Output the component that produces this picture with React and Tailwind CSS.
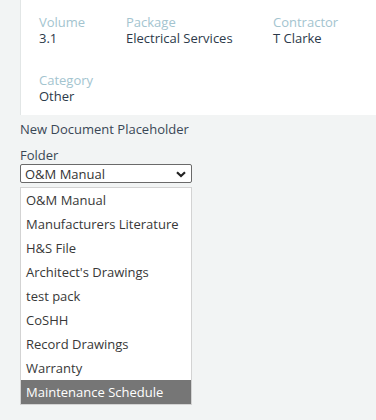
const details = [
  { label: "Volume", value: "3.1" },
  { label: "Package", value: "Electrical Services" },
  { label: "Contractor", value: "T Clarke" },
  { label: "Category", value: "Other" },
];

const folders = [
  "O&M Manual",
  "Manufacturers Literature",
  "H&S File",
  "Architect's Drawings",
  "test pack",
  "CoSHH",
  "Record Drawings",
  "Warranty",
  "Maintenance Schedule",
];

// pale blue label over a dark value
function Field({ label, value }) {
  return (
    <div className="leading-[16px]">
      <div className="text-[#a3c4cf]">{label}</div>
      <div className="text-[#2c3a4a]">{value}</div>
    </div>
  );
}

export default function App() {
  const selected = "Maintenance Schedule";

  return (
    <div
      className="min-h-[420px] w-full bg-[#f2f4f4] text-[13px]"
      style={{ fontFamily: '"Open Sans", sans-serif' }}
    >
      {/* details card */}
      <div className="ml-[20px] h-[115px] border-l border-[#e2e6e6] bg-white pl-[18px] pt-[14px]">
        <div className="grid grid-cols-[87px_147px_1fr] gap-y-[26px]">
          {details.map((d) => (
            <Field key={d.label} label={d.label} value={d.value} />
          ))}
        </div>
      </div>

      {/* form */}
      <div className="px-[20px] pt-[6px] leading-[16px] text-[#3a4756]">
        <div>New Document Placeholder</div>
        <div className="mt-[10px]">Folder</div>

        {/* select box */}
        <div className="mt-[1px] flex h-[19px] w-[172px] items-center justify-between rounded-[2px] border border-[#6a6a6a] bg-white pl-[4px] pr-[5px] text-[#333]">
          <span>O&amp;M Manual</span>
          <svg width="10" height="7" viewBox="0 0 10 7" className="mt-[1px]">
            <path d="M1 1.2 L5 5 L9 1.2" fill="none" stroke="#222" strokeWidth="2.2" />
          </svg>
        </div>

        {/* open listbox */}
        <div className="mt-[4px] w-[172px] border border-[#d3d3d3] bg-white">
          {folders.map((f) => (
            <div
              key={f}
              className={
                f === selected
                  ? "flex h-[24px] items-center bg-[#767676] pl-[5px] text-white"
                  : "flex h-[24px] items-center pl-[5px] text-[#383838]"
              }
            >
              {f}
            </div>
          ))}
        </div>
      </div>
    </div>
  );
}
